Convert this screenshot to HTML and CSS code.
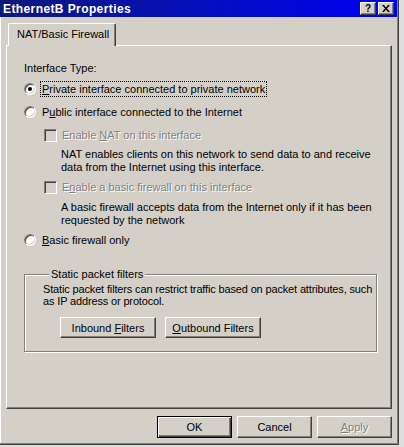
FILE: index.html
```html
<!DOCTYPE html>
<html>
<head>
<meta charset="utf-8">
<link rel="stylesheet" href="styles.css">
</head>
<body>
<div class="window">
  <div class="titlebar">
    <span class="title">EthernetB Properties</span>
    <div class="caption-btns">
      <div class="cbtn help">?</div>
      <div class="cbtn close"><svg width="8" height="7" viewBox="0 0 8 7"><path d="M0 0h2l2 2.5L6 0h2L5 3.5 8 7H6L4 4.5 2 7H0l3-3.5z" fill="#000"/></svg></div>
    </div>
  </div>
  <div class="tabs"><div class="tab">NAT/Basic Firewall</div></div>
  <div class="panel">
    <div class="heading">Interface Type:</div>
    <div class="row r1"><span class="radio checked"></span><span class="lbl focus"><u>P</u>rivate interface connected to private network</span></div>
    <div class="row r2"><span class="radio"></span><span class="lbl">P<u>u</u>blic interface connected to the Internet</span></div>
    <div class="row c1 sub"><span class="check"></span><span class="lbl disabled">Enable <u>N</u>AT on this interface</span></div>
    <p class="desc d1">NAT enables clients on this network to send data to and receive<br>data from the Internet using this interface.</p>
    <div class="row c2 sub"><span class="check"></span><span class="lbl disabled">E<u>n</u>able a basic firewall on this interface</span></div>
    <p class="desc d2">A basic firewall accepts data from the Internet only if it has been<br>requested by the network</p>
    <div class="row r3"><span class="radio"></span><span class="lbl"><u>B</u>asic firewall only</span></div>
    <fieldset class="group">
      <legend>Static packet filters</legend>
      <p class="gtext">Static packet filters can restrict traffic based on packet attributes, such<br>as IP address or protocol.</p>
      <div class="gbtns">
        <div class="btn wide"><span>Inbound <u>F</u>ilters</span></div>
        <div class="btn wide"><span><u>O</u>utbound Filters</span></div>
      </div>
    </fieldset>
  </div>
  <div class="actions">
    <div class="btn default">OK</div>
    <div class="btn">Cancel</div>
    <div class="btn disabled-btn"><span><u>A</u>pply</span></div>
  </div>
</div>
</body>
</html>
```

FILE: styles.css
```css
* { box-sizing: border-box; }
html, body { margin: 0; padding: 0; }
body {
  background: #dedede;
  font-family: "Liberation Sans", Arial, sans-serif;
  font-size: 11px;
  color: #000;
  width: 404px;
  height: 447px;
  overflow: hidden;
}
u { text-decoration: underline; text-underline-offset: 1px; }

.window {
  width: 399px;
  height: 445px;
  background: #d4d0c8;
  border-right: 1px solid #404040;
  border-bottom: 1px solid #404040;
  box-shadow: inset -1px -1px 0 #808080, inset 1px 0 0 #ffffff;
  display: flex;
  flex-direction: column;
}

.titlebar {
  height: 17px;
  margin-right: 1px;
  background: linear-gradient(90deg, #0c1a78 0%, #0610b8 45%, #0000f2 100%);
  display: flex;
  align-items: center;
}
.title {
  color: #fff;
  font-weight: bold;
  font-size: 12px;
  padding-left: 3px;
  letter-spacing: 0.4px;
}
.caption-btns {
  margin-left: auto;
  margin-right: 3px;
  display: flex;
  gap: 1px;
}
.cbtn {
  width: 16px;
  height: 13px;
  background: #d4d0c8;
  border-top: 1px solid #fff;
  border-left: 1px solid #fff;
  border-right: 1px solid #404040;
  border-bottom: 1px solid #404040;
  box-shadow: inset -1px -1px 0 #808080;
  display: flex;
  align-items: center;
  justify-content: center;
  font-weight: bold;
  font-size: 10px;
  line-height: 1;
}
.cbtn.close { margin-left: 1px; }

.tabs {
  margin: 6px 0 0 8px;
  height: 22px;
  display: flex;
  position: relative;
  z-index: 1;
}
.tab {
  height: 23px;
  padding: 0 9px 0 8px;
  width: 108px;
  background: #d4d0c8;
  border-top: 1px solid #fff;
  border-left: 1px solid #fff;
  border-right: 1px solid #404040;
  box-shadow: inset -1px 0 0 #808080;
  border-radius: 2px 2px 0 0;
  line-height: 21px;
  white-space: nowrap;
}

.panel {
  margin-left: 6px;
  width: 386px;
  height: 364px;
  border-top: 1px solid #fff;
  border-left: 1px solid #fff;
  border-right: 1px solid #404040;
  border-bottom: 1px solid #404040;
  box-shadow: inset -1px -1px 0 #808080;
  padding: 15px 0 0 17px;
}

.heading { height: 14px; line-height: 14px; }

.row {
  display: flex;
  align-items: center;
  height: 16px;
  white-space: nowrap;
}
.r1 { margin-top: 6px; }
.r2 { margin-top: 7px; }
.c1 { margin-top: 7px; }
.c2 { margin-top: 6px; }
.r3 { margin-top: 6px; }
.sub { padding-left: 20px; }

.radio {
  width: 12px;
  height: 12px;
  border-radius: 50%;
  background: #fff;
  border: 1px solid;
  border-color: #808080 #ffffff #ffffff #808080;
  box-shadow: inset 1px 1px 0 #404040, inset -1px -1px 0 #d4d0c8;
  flex: none;
  display: flex;
  align-items: center;
  justify-content: center;
}
.radio.checked::after {
  content: "";
  width: 4px;
  height: 4px;
  border-radius: 50%;
  background: #000;
}
.radio + .lbl { margin-left: 5px; }

.check {
  width: 13px;
  height: 13px;
  background: #d4d0c8;
  border: 1px solid;
  border-color: #808080 #ffffff #ffffff #808080;
  box-shadow: inset 1px 1px 0 #404040, inset -1px -1px 0 #d4d0c8;
  flex: none;
}
.check + .lbl { margin-left: 4px; }

.lbl { padding: 1px 1px; line-height: 12px; }
.focus { outline: 1px dotted #000; outline-offset: 0; }
.disabled { color: #808080; text-shadow: 1px 1px 0 #fff; }

.desc {
  margin: 0;
  padding-left: 37px;
  line-height: 12.5px;
  white-space: nowrap;
}
.d1 { margin-top: 5px; }
.d2 { margin-top: 6px; }

.group {
  margin: 20px 0 0 0;
  width: 353px;
  min-width: 0;
  height: 84px;
  padding: 4px 0 0 18px;
  border: 1px solid #808080;
  box-shadow: inset 1px 1px 0 #fff, 1px 1px 0 #fff;
}
.group legend {
  padding: 0 2px;
  margin-left: 6px;
  background: #d4d0c8;
  line-height: 12px;
}
.gtext {
  margin: 0;
  line-height: 11.5px;
  white-space: nowrap;
  letter-spacing: -0.15px;
}
.gbtns {
  display: flex;
  gap: 9px;
  margin-top: 10px;
  margin-left: 17px;
}

.btn {
  width: 75px;
  height: 22px;
  background: #d4d0c8;
  border-top: 1px solid #fff;
  border-left: 1px solid #fff;
  border-right: 1px solid #404040;
  border-bottom: 1px solid #404040;
  box-shadow: inset -1px -1px 0 #808080;
  display: flex;
  align-items: center;
  justify-content: center;
  white-space: nowrap;
}
.btn.wide { width: 96px; height: 21px; }
.btn.default {
  border: 1px solid #000;
  box-shadow: inset 1px 1px 0 #fff, inset -1px -1px 0 #404040, inset -2px -2px 0 #808080;
}
.disabled-btn { color: #808080; text-shadow: 1px 1px 0 #fff; }

.actions {
  display: flex;
  gap: 5px;
  justify-content: flex-end;
  margin-top: 7px;
  margin-right: 6px;
}
```
